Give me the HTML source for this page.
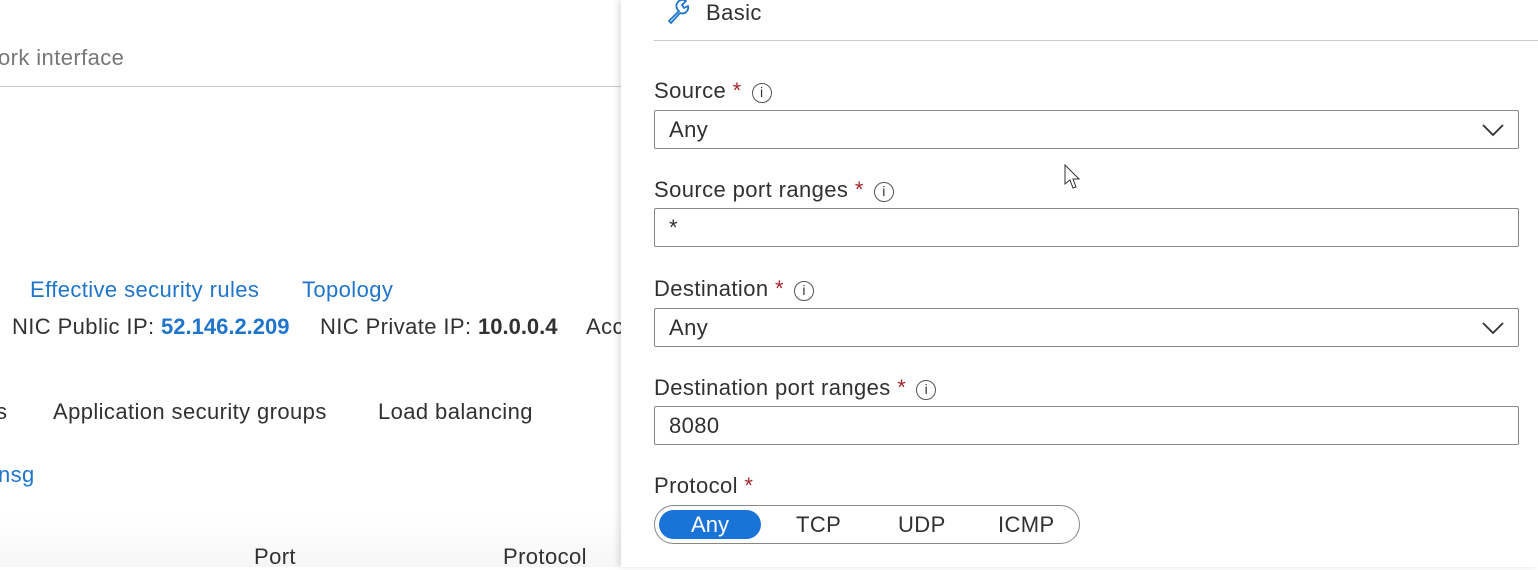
<!DOCTYPE html>
<html><head><style>
*{margin:0;padding:0;box-sizing:border-box}
body{width:1538px;height:567px;overflow:hidden;background:#fff;font-family:"Liberation Sans",sans-serif;color:#323130;position:relative}
.a{position:absolute;white-space:nowrap}
.t{font-size:22px;letter-spacing:0.4px;line-height:26px}
.blue{color:#1f75cc}
.box{position:absolute;left:654px;width:865px;height:39px;border:1px solid #8a8886;border-radius:2px;font-size:22px;letter-spacing:0.4px;padding:0 0 0 14px;line-height:38px}
.req{color:#a4262c}
.info{display:inline-block;width:20px;height:20px;border:1.3px solid #555;border-radius:50%;font-size:14px;text-align:center;line-height:17px;vertical-align:1px;margin-left:10px;font-family:"Liberation Sans",sans-serif;letter-spacing:0}
</style></head><body>
<div style="position:absolute;left:0;top:515px;width:621px;height:52px;background:linear-gradient(#fff,#f6f6f6)"></div>
<div class="a t" style="left:-2px;top:45px;color:#777">ork interface</div>
<div class="a" style="left:0;top:86px;width:621px;height:1px;background:#c8c8c8"></div>
<div class="a t blue" style="left:30px;top:277px">Effective security rules</div>
<div class="a t blue" style="left:302px;top:277px">Topology</div>
<div class="a t" style="left:12px;top:314px">NIC Public IP: <b class="blue" style="letter-spacing:0">52.146.2.209</b></div>
<div class="a t" style="left:320px;top:314px">NIC Private IP: <b style="letter-spacing:0">10.0.0.4</b></div>
<div class="a t" style="left:586px;top:314px">Acc</div>
<div class="a t" style="left:-4px;top:399px">s</div>
<div class="a t" style="left:53px;top:399px">Application security groups</div>
<div class="a t" style="left:378px;top:399px">Load balancing</div>
<div class="a t blue" style="left:-2px;top:462px">nsg</div>
<div class="a t" style="left:254px;top:544px">Port</div>
<div class="a t" style="left:503px;top:544px">Protocol</div>

<div style="position:absolute;left:621px;top:0;width:917px;height:567px;background:#fff;box-shadow:-3px 0 6px rgba(0,0,0,.12)"></div>
<svg class="a" style="left:666px;top:0" width="28" height="24" viewBox="0 0 28 24"><path d="M3 21 L13 11 A6 6 0 0 1 20 1 L16 5 L18 8 L22 6 A6 6 0 0 1 14 13 L5 23 Z" fill="none" stroke="#1f75cc" stroke-width="1.8" stroke-linejoin="round"/></svg>
<div class="a t" style="left:706px;top:0px">Basic</div>
<div class="a" style="left:654px;top:40px;width:884px;height:1px;background:#c8c8c8"></div>

<div class="a t" style="left:654px;top:78px">Source <span class="req">*</span><span class="info">i</span></div>
<div class="box" style="top:110px">Any<svg style="position:absolute;right:14px;top:12px" width="22" height="14"><path d="M1 2 L11 12 L21 2" fill="none" stroke="#323130" stroke-width="1.8"/></svg></div>
<div class="a t" style="left:654px;top:177px">Source port ranges <span class="req">*</span><span class="info">i</span></div>
<div class="box" style="top:208px">*</div>
<div class="a t" style="left:654px;top:276px">Destination <span class="req">*</span><span class="info">i</span></div>
<div class="box" style="top:308px">Any<svg style="position:absolute;right:14px;top:12px" width="22" height="14"><path d="M1 2 L11 12 L21 2" fill="none" stroke="#323130" stroke-width="1.8"/></svg></div>
<div class="a t" style="left:654px;top:375px">Destination port ranges <span class="req">*</span><span class="info">i</span></div>
<div class="box" style="top:406px">8080</div>
<div class="a t" style="left:654px;top:473px">Protocol <span class="req">*</span></div>
<div class="a" style="left:654px;top:505px;width:426px;height:39px;border:1px solid #8a8886;border-radius:20px"></div>
<div class="a" style="left:659px;top:510px;width:102px;height:29px;background:#1a73d6;border-radius:15px;color:#fff;font-size:22px;text-align:center;line-height:29px">Any</div>
<div class="a t" style="left:796px;top:512px">TCP</div>
<div class="a t" style="left:898px;top:512px">UDP</div>
<div class="a t" style="left:998px;top:512px">ICMP</div>
<svg class="a" style="left:1064px;top:164px" width="18" height="26"><path d="M1 1 L1 20 L6 16 L9 24 L12 23 L9 15 L15 15 Z" fill="#fff" stroke="#333" stroke-width="1"/></svg>
</body></html>
